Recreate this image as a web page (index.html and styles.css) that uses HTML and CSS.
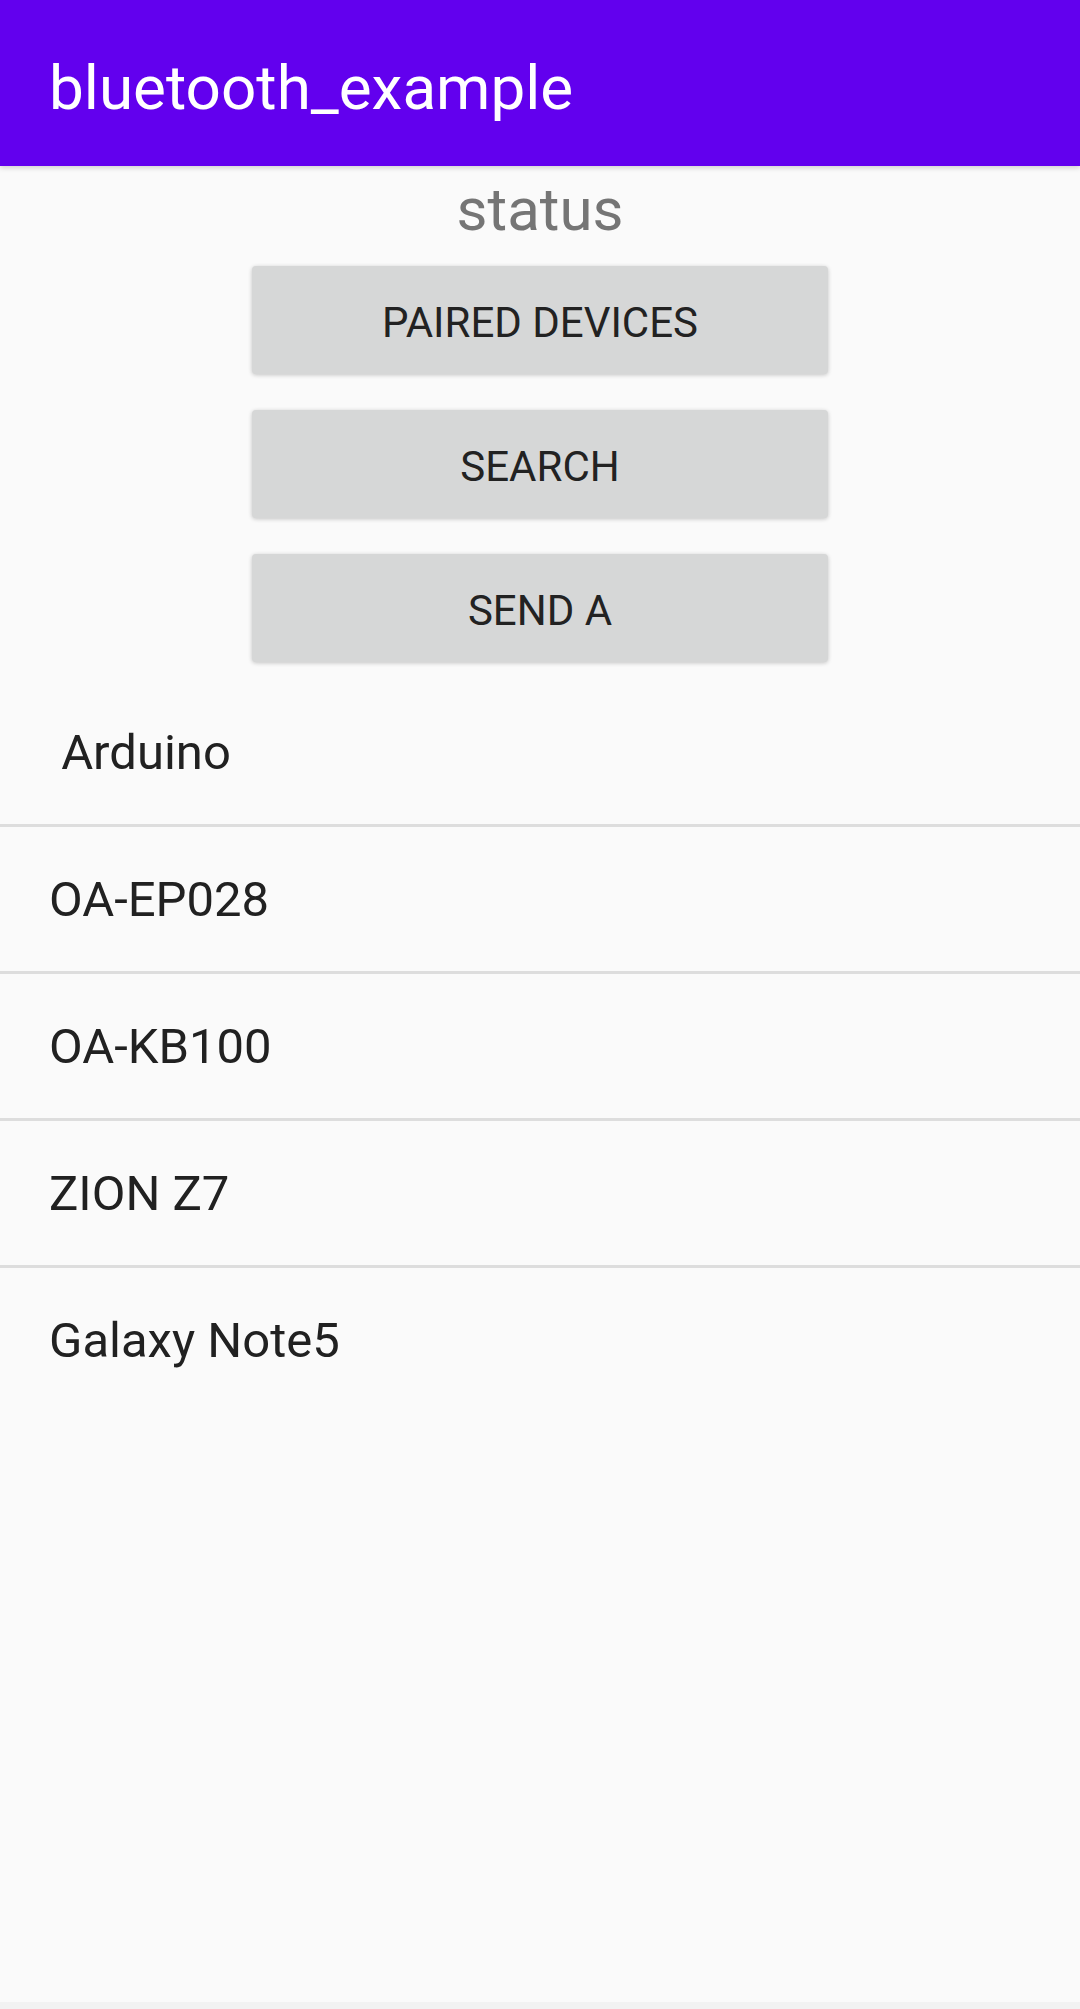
FILE: index.html
```html
<html>

<head>
    <title>bluetooth_example</title>
    <link rel="stylesheet" href="styles.css">
</head>

<body>
    <div class="app">
        <div class="toolbar">
            <span class="toolbar-title">bluetooth_example</span>
        </div>

        <div class="content">
            <div id="status" class="status">status</div>

            <div class="buttons">
                <button id="pairedButton" class="btn">PAIRED DEVICES</button>
                <button id="searchButton" class="btn">SEARCH</button>
                <button id="sendButton" class="btn">SEND A</button>
            </div>

            <ul id="deviceList" class="device-list">
                <li class="device"> Arduino</li>
                <li class="device">OA-EP028</li>
                <li class="device">OA-KB100</li>
                <li class="device">ZION Z7</li>
                <li class="device">Galaxy Note5</li>
            </ul>
        </div>

        <div class="nav-edge"></div>
    </div>
</body>

</html>
```

FILE: styles.css
```css
html,
body {
    height: 100%;
    margin: 0;
}

body {
    font-family: Roboto, 'Noto Sans', sans-serif;
    background-color: #fafafa;
    overflow: hidden;
}

.app {
    height: 100%;
    display: flex;
    flex-direction: column;
}

.toolbar {
    height: 166px;
    flex-shrink: 0;
    display: flex;
    align-items: center;
    padding: 8px 0 0 49px;
    box-sizing: border-box;
    background-color: #6200ee;
    box-shadow: 0 2px 5px rgba(0, 0, 0, 0.16);
    position: relative;
    z-index: 1;
}

.toolbar-title {
    color: #ffffff;
    font-size: 62px;
    font-weight: 400;
}

.content {
    flex-grow: 1;
    display: flex;
    flex-direction: column;
}

.status {
    height: 82px;
    padding-top: 8px;
    box-sizing: border-box;
    line-height: 72px;
    text-align: center;
    font-size: 60px;
    color: #757575;
}

.buttons {
    display: flex;
    flex-direction: column;
    align-items: center;
}

.btn {
    width: 576px;
    height: 108px;
    margin: 18px 0;
    border: none;
    border-radius: 4px;
    background-color: #d6d7d7;
    box-shadow: 0 1px 4px rgba(0, 0, 0, 0.22);
    font-family: Roboto, 'Noto Sans', sans-serif;
    font-size: 42px;
    font-weight: 400;
    color: #222222;
    padding: 4px 0 0 0;
    cursor: pointer;
}

.device-list {
    list-style: none;
    margin: 0;
    padding: 0;
}

.device {
    height: 144px;
    display: flex;
    align-items: center;
    padding-left: 49px;
    border-bottom: 3px solid #dddddd;
    font-size: 49px;
    color: #212121;
    white-space: pre;
}

.device:last-child {
    border-bottom: none;
}

.nav-edge {
    height: 7px;
    flex-shrink: 0;
    background-color: #f2f2f2;
}
```
